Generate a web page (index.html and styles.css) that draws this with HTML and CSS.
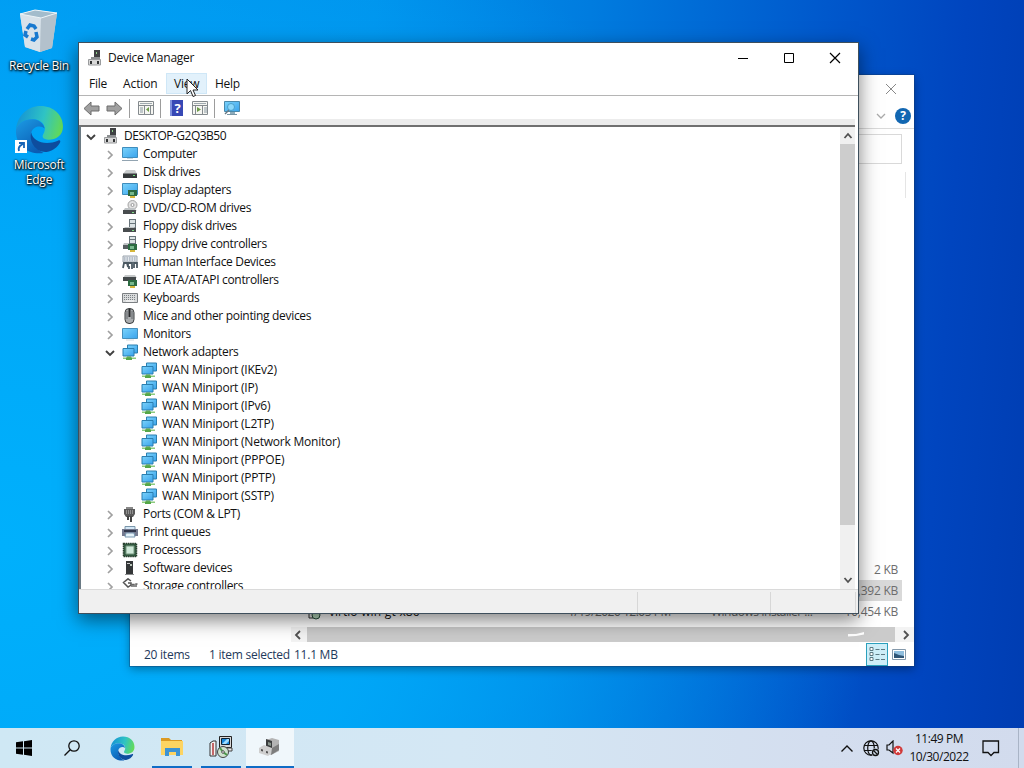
FILE: index.html
```html
<!DOCTYPE html>
<html lang="en">
<head>
  <meta charset="UTF-8">
  <meta name="viewport" content="width=device-width, initial-scale=1.0">
  <title>Device Manager</title>
  <link rel="stylesheet" href="styles.css">
</head>

<body>
  <!-- shared icons -->
  <svg class="defs" width="0" height="0">
    <defs>
      <linearGradient id="screen" x1="0" y1="0" x2="1" y2="1">
        <stop offset="0" stop-color="#7bd3fb"/><stop offset="1" stop-color="#3aa3ec"/>
      </linearGradient>
      <linearGradient id="edgeGreen" x1="0" y1="0.4" x2="1" y2="0.6">
        <stop offset="0" stop-color="#1593d4"/><stop offset="0.55" stop-color="#2fc3c4"/><stop offset="1" stop-color="#66dc54"/>
      </linearGradient>
      <linearGradient id="edgeBlue" x1="0" y1="0" x2="0.6" y2="1">
        <stop offset="0" stop-color="#1c9be4"/><stop offset="1" stop-color="#0b5cb4"/>
      </linearGradient>
    </defs>
    <symbol id="chev-right" viewBox="0 0 10 10"><path d="M3 1l4 4-4 4" fill="none" stroke="#a0a0a0" stroke-width="1.700"/></symbol>
    <symbol id="chev-down" viewBox="0 0 10 10"><path d="M1 3l4 4 4-4" fill="none" stroke="#404040" stroke-width="1.900"/></symbol>
    <symbol id="root" viewBox="0 0 16 16">
      <path d="M7 0h6v8H7z" fill="#3f4143"/><path d="M9 2h1v2H9z" fill="#8ed08b"/>
      <path d="M4 7h9v3H4z" fill="#8c8f91"/><path d="M1.500 9.500h12v5.500h-12z" fill="#d8d8d8" stroke="#9a9c9e"/>
      <path d="M3 11h2v3H3zM10 11h2v3h-2z" fill="#303234"/>
    </symbol>
    <symbol id="computer" viewBox="0 0 16 16">
      <path d="M.5 1.500h15v10H.5z" fill="url(#screen)" stroke="#3f8dbd"/><path d="M5 12h6v1H5z" fill="#c6d6df"/><path d="M0 14.500h16" stroke="#92a4b1"/>
    </symbol>
    <symbol id="disk" viewBox="0 0 16 16">
      <path d="M4 6h9l2 4H1z" fill="#c9cccd"/><path d="M1 9.500h14V14H1z" fill="#35393b"/><path d="M11 11h2v1h-2z" fill="#6ce077"/>
    </symbol>
    <symbol id="card" viewBox="0 0 16 16">
      <path d="M6 8h9v6H6z" fill="#2c6b41"/><path d="M8 10h4v3H8z" fill="#78b98c"/><path d="M8 14h5v2H8z" fill="#d6b73c"/>
    </symbol>
    <symbol id="display" viewBox="0 0 16 16">
      <path d="M.5 1.500h15v11H.5z" fill="url(#screen)" stroke="#3f8dbd"/><use href="#card"/>
    </symbol>
    <symbol id="dvd" viewBox="0 0 16 16">
      <circle cx="10.500" cy="5" r="4.500" fill="#e1e1e1" stroke="#a3a3a3"/><circle cx="10.500" cy="5" r="1.500" fill="#fff" stroke="#999"/>
      <path d="M3 8h9l3 3H1z" fill="#bfc3c5"/><path d="M1 10h13v4H1z" fill="#484c4e"/><path d="M10 12h2v1h-2z" fill="#81dd86"/>
    </symbol>
    <symbol id="floppy" viewBox="0 0 16 16">
      <path d="M7 1h7v9H7z" fill="#68747a"/><path d="M8 2h5v3H8zM8 6h5v3H8z" fill="#dbe2e4"/>
      <path d="M3 9h9l2 2H1z" fill="#bfc3c5"/><path d="M1 10h13v4H1z" fill="#484c4e"/><path d="M10 12h2v1h-2z" fill="#81dd86"/>
    </symbol>
    <symbol id="floppy-ctl" viewBox="0 0 16 16">
      <path d="M7 0h7v8H7z" fill="#68747a"/><path d="M8 1h5v2H8zM8 4h5v3H8z" fill="#dbe2e4"/>
      <path d="M2 7h5v2H1z" fill="#bfc3c5"/><path d="M1 9h9v4H1z" fill="#565d60"/><use href="#card"/>
    </symbol>
    <symbol id="hid" viewBox="0 0 16 16">
      <path d="M1 2h14v6H1z" fill="#e3e7ec" stroke="#9ba4ad"/><path d="M2 4h12M2 6h12" stroke="#8997a6" stroke-dasharray="1.500 1"/>
      <path d="M1 14l1-5h3l1 4V9h4v6M7 15v-3M12 14V9h3v5" fill="none" stroke="#4b5962" stroke-width="1.800"/>
    </symbol>
    <symbol id="ide" viewBox="0 0 16 16">
      <path d="M3 3h10l2 3H1z" fill="#c5c8c9"/><path d="M1 5h13v4H1z" fill="#44494b"/><use href="#card"/>
    </symbol>
    <symbol id="keyboard" viewBox="0 0 16 16">
      <path d="M.5 3.500h15v9H.5z" fill="#d9dbdc" stroke="#7c8083"/><path d="M2 5.500h12M2 7.500h12M2 9.500h12" stroke="#7b8185" stroke-dasharray="1 1"/><path d="M4 11h8" stroke="#fff"/>
    </symbol>
    <symbol id="mouse" viewBox="0 0 16 16">
      <rect x="3" y=".5" width="9" height="15" rx="4" fill="#a9acae" stroke="#3b3e40"/><path d="M7.500 1v8" stroke="#26292b" stroke-width="2"/><path d="M5 3v8M10 3v8" stroke="#65696c"/>
    </symbol>
    <symbol id="monitor" viewBox="0 0 16 16">
      <path d="M.5 2.500h15v10H.5z" fill="url(#screen)" stroke="#4690bd"/><path d="M4 14h8" stroke="#d3d9dd"/>
    </symbol>
    <symbol id="network" viewBox="0 0 16 16">
      <path d="M5.500 1h10v8h-10z" fill="url(#screen)" stroke="#2b7fb0"/><path d="M1 4.500h11V12H1z" fill="url(#screen)" stroke="#2b7fb0"/>
      <path d="M5 12.500h4V14H5z" fill="#4f9a43"/><path d="M1 13.500h13V15H1z" fill="#8ccb7e"/><path d="M4 13.500h6V16H4z" fill="#55a648"/>
    </symbol>
    <symbol id="port" viewBox="0 0 16 16">
      <path d="M4 1h7v3H4z" fill="#888"/><path d="M2 3h11v5l-2 3H4L2 8z" fill="#5a5a5a"/><path d="M4 5h8M4 7h8" stroke="#c7c7c7" stroke-dasharray="1 1"/><path d="M5 10h2v4H5zM8 10h2v6H8z" fill="#444"/>
    </symbol>
    <symbol id="printer" viewBox="0 0 16 16">
      <path d="M3 2.500h10V6H3z" fill="#d4e7f6" stroke="#7995a9"/><path d="M0 5h16v7H0z" fill="#74798e"/><path d="M2 6h12v2H2z" fill="#30354a"/><path d="M4 9h8l1 4H3z" fill="#e5f3fa" stroke="#7897b0"/>
    </symbol>
    <symbol id="cpu" viewBox="0 0 16 16">
      <path d="M1.500 1.500h13v13h-13z" fill="#345d43"/><path d="M1.500 1.500h13v13h-13z" fill="none" stroke="#273e2d" stroke-width="1.500" stroke-dasharray="1.500 .7"/><path d="M4 4h8v8H4z" fill="#cfe9d9" stroke="#75967f"/>
    </symbol>
    <symbol id="software" viewBox="0 0 16 16">
      <path d="M4 1h7v13H4z" fill="#343738"/><path d="M5 3h3v1H5z" fill="#ccc"/><path d="M8 4h2v2H8z" fill="#b9c6ba"/><path d="M3 14h9v1H3z" fill="#8b8d8e"/>
    </symbol>
    <symbol id="storage" viewBox="0 0 16 16">
      <path d="M9 3L6 .8 1.500 4.500 6 9l3-2V5H6" fill="none" stroke="#555" stroke-width="1.500"/><path d="M10 9V6.500h2V9M14 9V6h1.500" fill="none" stroke="#666" stroke-width="1.500"/>
    </symbol>
    <symbol id="edge" viewBox="0 0 48 48">
      <path d="M1 24C2 11 12 1 25 1c13 0 22 9 22 20 0 9-7 13-14 13-6 0-7-3-5-6 4-7-2-14-10-14C9 14 3 18 1 24z" fill="url(#edgeGreen)"/>
      <path d="M1 24c2-6 8-10 16-10 6 0 11 4 12 9-3-3-11-3-13 4-2 8 4 16 12 20C13 49 0 40 1 24z" fill="url(#edgeBlue)"/>
      <path d="M16 27c-3 9 5 20 15 19 6-1 11-5 13-9 1-2 0-3-2-2-12 5-25 1-26-8z" fill="#0e4d9e"/>
    </symbol>
  </svg>

  <div class="desktop">
    <div class="shortcuts">
      <div class="shortcut">
        <svg class="bin" width="40" height="44" viewBox="0 0 40 44">
          <path d="M1 5L16 1l22 3-5 35-12 4-15-5z" fill="#c9d6df"/>
          <path d="M1 5l21 4-1 34-15-5z" fill="#d8e2ea"/><path d="M22 9l16-5-5 35-12 4z" fill="#b3c1cc"/>
          <path d="M1 5L16 1l22 3-16 5z" fill="#a3bccc" stroke="#edf4f8"/>
          <path d="M8 20l3-4 4 1 2 3M17 23l1 5-3 3-3-1M9 28l-3-2 1-4" fill="none" stroke="#1879cf" stroke-width="3.500"/>
        </svg>
        <span>Recycle Bin</span>
      </div>
      <div class="shortcut">
        <div class="edge-icon">
          <svg width="49" height="49"><use href="#edge"/></svg>
          <svg class="arrow" width="12" height="13" viewBox="0 0 12 13"><path d="M0 0h12v13H0z" fill="#fff"/><path d="M4 3h5v5M9 3L5 6q-2 2-1 5" fill="none" stroke="#1763b5" stroke-width="1.800"/></svg>
        </div>
        <span>Microsoft<br>Edge</span>
      </div>
    </div>

    <!-- file explorer behind -->
    <div class="window explorer">
      <div class="ex-title">
        <svg width="12" height="12" viewBox="0 0 12 12"><path d="M1 1l10 10M11 1L1 11" stroke="#888"/></svg>
      </div>
      <div class="ex-ribbon">
        <svg width="10" height="10" viewBox="0 0 10 10"><path d="M1 3l4 4 4-4" fill="none" stroke="#aaa" stroke-width="1.300"/></svg>
        <span class="help-badge">?</span>
      </div>
      <div class="ex-address"><div class="ex-search"></div></div>
      <div class="ex-header"></div>
      <div class="ex-body">
        <div class="ex-nav"></div>
        <div class="ex-files">
          <div class="file"><span></span><span></span><span></span><span></span><span class="size">2 KB</span></div>
          <div class="file selected"><span></span><span></span><span></span><span></span><span class="size">11,392 KB</span></div>
          <div class="file">
            <svg width="16" height="16" viewBox="0 0 16 16"><path d="M2 2h4v12H2z" fill="#eee" stroke="#333"/><path d="M7 2h6v5H7z" fill="#49a7d9" stroke="#333"/><circle cx="9" cy="11" r="4" fill="#b9dcc0" stroke="#264c3a"/></svg>
            <span class="name">virtio-win-gt-x86</span><span>1/19/2020 12:05 PM</span><span>Windows Installer ...</span><span class="size">10,454 KB</span>
          </div>
          <div class="hscroll">
            <svg width="10" height="10" viewBox="0 0 10 10"><path d="M7 1L3 5l4 4" fill="none" stroke="#505050" stroke-width="1.800"/></svg>
            <div class="hthumb"><svg width="16" height="5" viewBox="0 0 16 5"><path d="M0 2l8 0 8-2v2.500L8 4 0 4.500z" fill="#fff"/></svg></div>
            <svg width="10" height="10" viewBox="0 0 10 10"><path d="M3 1l4 4-4 4" fill="none" stroke="#505050" stroke-width="1.800"/></svg>
          </div>
        </div>
      </div>
      <div class="ex-status">
        <span class="count">20 items</span><span class="picked">1 item selected</span><span>11.1 MB</span>
        <div class="view-details">
          <svg width="17" height="14" viewBox="0 0 17 14"><path d="M1 .5h3v3H1zM1 5.500h3v3H1zM1 10.500h3v3H1z" fill="#fff" stroke="#5d7a83"/><path d="M6.500 2.500h4M6.500 7.500h4M6.500 12.500h4M12 2.500h4M12 7.500h4M12 12.500h4" stroke="#5d7a83"/></svg>
        </div>
        <svg width="14" height="11" viewBox="0 0 14 11"><path d="M.5.5h13v10H.5z" fill="#fff" stroke="#8499ab"/><path d="M2 2h10v7H2z" fill="#8fbede"/><path d="M2 4l5 2 5 1v2H2z" fill="#2f5576"/></svg>
      </div>
    </div>

    <div class="window devmgr">
      <div class="titlebar">
        <svg width="16" height="16"><use href="#root"/></svg>
        <span class="title">Device Manager</span>
        <div class="controls">
          <svg width="12" height="12" viewBox="0 0 12 12"><path d="M1 6.500h10" stroke="#000"/></svg>
          <svg width="12" height="12" viewBox="0 0 12 12"><path d="M1.500 1.500h9v9h-9z" fill="none" stroke="#000"/></svg>
          <svg width="12" height="12" viewBox="0 0 12 12"><path d="M1 1l10 10M11 1L1 11" stroke="#000" stroke-width="1.200"/></svg>
        </div>
      </div>
      <div class="menubar">
        <span class="m-file">File</span><span class="m-action">Action</span><span class="m-view">View</span><span class="m-help">Help</span>
      </div>
      <div class="toolbar">
        <svg width="17" height="15" viewBox="0 0 17 15"><path d="M1 7.500L8 1v4h8v5H8v4z" fill="#a0a0a0" stroke="#6d6d6d"/></svg>
        <svg class="fwd" width="17" height="15" viewBox="0 0 17 15"><path d="M16 7.500L9 1v4H1v5h8v4z" fill="#a0a0a0" stroke="#6d6d6d"/></svg>
        <i class="sep"></i>
        <svg width="16" height="14" viewBox="0 0 16 14"><path d="M.5.5h15v13H.5z" fill="#f6f6f2" stroke="#848a8e"/><path d="M2 2.500h12" stroke="#a0aab0"/><path d="M1 4.500h14M6.500 5v8M12.500 5v8" stroke="#848a8e"/><path d="M2 7h3M2 9h3M2 11h3" stroke="#8a99a2"/><path d="M11 6v5L8 8.500z" fill="#6b9a47"/></svg>
        <i class="sep"></i>
        <svg class="help-book" width="13" height="16" viewBox="0 0 13 16"><path d="M0 0h13v16H0z" fill="#3748b5"/><path d="M0 0h2v16H0z" fill="#7e90dd"/><text x="7.500" y="13" text-anchor="middle">?</text></svg>
        <svg class="pane" width="16" height="14" viewBox="0 0 16 14"><path d="M.5.5h15v13H.5z" fill="#f6f6f2" stroke="#848a8e"/><path d="M2 2.500h12" stroke="#a0aab0"/><path d="M1 4.500h14M10.500 5v8M3.500 5v8" stroke="#848a8e"/><path d="M12 7h3M12 9h3M12 11h3" stroke="#8a99a2"/><path d="M5 6v5l4-2.500z" fill="#6b9a47"/></svg>
        <i class="sep"></i>
        <svg width="17" height="16" viewBox="0 0 17 16"><path d="M1.500 1.500h15v10h-15z" fill="url(#screen)" stroke="#4a89ab"/><path d="M7 12h5v2H7z" fill="#8cabbb"/><path d="M4 14.500h10" stroke="#7895a5"/><circle cx="8" cy="7" r="3.500" fill="#8bd8fb" stroke="#4b9fca"/><path d="M6 10l-4 4" stroke="#667984" stroke-width="1.500"/></svg>
      </div>
      <div class="tree-box">
        <div class="tree">
          <div class="node root"><svg class="chev"><use href="#chev-down"/></svg><svg class="ico"><use href="#root"/></svg>DESKTOP-G2Q3B50</div>
          <div class="node"><svg class="chev"><use href="#chev-right"/></svg><svg class="ico"><use href="#computer"/></svg>Computer</div>
          <div class="node"><svg class="chev"><use href="#chev-right"/></svg><svg class="ico"><use href="#disk"/></svg>Disk drives</div>
          <div class="node"><svg class="chev"><use href="#chev-right"/></svg><svg class="ico"><use href="#display"/></svg>Display adapters</div>
          <div class="node"><svg class="chev"><use href="#chev-right"/></svg><svg class="ico"><use href="#dvd"/></svg>DVD/CD-ROM drives</div>
          <div class="node"><svg class="chev"><use href="#chev-right"/></svg><svg class="ico"><use href="#floppy"/></svg>Floppy disk drives</div>
          <div class="node"><svg class="chev"><use href="#chev-right"/></svg><svg class="ico"><use href="#floppy-ctl"/></svg>Floppy drive controllers</div>
          <div class="node"><svg class="chev"><use href="#chev-right"/></svg><svg class="ico"><use href="#hid"/></svg>Human Interface Devices</div>
          <div class="node"><svg class="chev"><use href="#chev-right"/></svg><svg class="ico"><use href="#ide"/></svg>IDE ATA/ATAPI controllers</div>
          <div class="node"><svg class="chev"><use href="#chev-right"/></svg><svg class="ico"><use href="#keyboard"/></svg>Keyboards</div>
          <div class="node"><svg class="chev"><use href="#chev-right"/></svg><svg class="ico"><use href="#mouse"/></svg>Mice and other pointing devices</div>
          <div class="node"><svg class="chev"><use href="#chev-right"/></svg><svg class="ico"><use href="#monitor"/></svg>Monitors</div>
          <div class="node"><svg class="chev"><use href="#chev-down"/></svg><svg class="ico"><use href="#network"/></svg>Network adapters</div>
          <div class="node leaf"><svg class="ico"><use href="#network"/></svg>WAN Miniport (IKEv2)</div>
          <div class="node leaf"><svg class="ico"><use href="#network"/></svg>WAN Miniport (IP)</div>
          <div class="node leaf"><svg class="ico"><use href="#network"/></svg>WAN Miniport (IPv6)</div>
          <div class="node leaf"><svg class="ico"><use href="#network"/></svg>WAN Miniport (L2TP)</div>
          <div class="node leaf"><svg class="ico"><use href="#network"/></svg>WAN Miniport (Network Monitor)</div>
          <div class="node leaf"><svg class="ico"><use href="#network"/></svg>WAN Miniport (PPPOE)</div>
          <div class="node leaf"><svg class="ico"><use href="#network"/></svg>WAN Miniport (PPTP)</div>
          <div class="node leaf"><svg class="ico"><use href="#network"/></svg>WAN Miniport (SSTP)</div>
          <div class="node"><svg class="chev"><use href="#chev-right"/></svg><svg class="ico"><use href="#port"/></svg>Ports (COM &amp; LPT)</div>
          <div class="node"><svg class="chev"><use href="#chev-right"/></svg><svg class="ico"><use href="#printer"/></svg>Print queues</div>
          <div class="node"><svg class="chev"><use href="#chev-right"/></svg><svg class="ico"><use href="#cpu"/></svg>Processors</div>
          <div class="node"><svg class="chev"><use href="#chev-right"/></svg><svg class="ico"><use href="#software"/></svg>Software devices</div>
          <div class="node"><svg class="chev"><use href="#chev-right"/></svg><svg class="ico"><use href="#storage"/></svg>Storage controllers</div>
        </div>
        <div class="vscroll">
          <svg width="10" height="17" viewBox="0 0 10 17"><path d="M1.500 11L5 7l3.500 4" fill="none" stroke="#505050" stroke-width="1.800"/></svg>
          <div class="vthumb"></div>
          <svg width="10" height="17" viewBox="0 0 10 17"><path d="M1.500 6L5 10l3.500-4" fill="none" stroke="#505050" stroke-width="1.800"/></svg>
        </div>
      </div>
      <div class="statusbar"><div></div><div></div><div></div></div>
    </div>

    <svg class="cursor" width="13" height="20" viewBox="0 0 13 20"><path d="M1 1v15l3.500-3.500L7 18.500l2.500-1L7 12h5z" fill="#fff" stroke="#222"/></svg>
  </div>

  <div class="taskbar">
    <div class="task"><svg width="16" height="16" viewBox="0 0 16 16"><path d="M0 2.300l7-1v6.200H0zM8 1.200L16 0v7.500H8zM0 8.500h7v6.200l-7-1zM8 8.500h8V16l-8-1.200z"/></svg></div>
    <div class="task"><svg width="18" height="18" viewBox="0 0 18 18"><circle cx="11" cy="7" r="5.200" fill="none" stroke="#111" stroke-width="1.300"/><path d="M7.200 10.800L1.500 16.500" stroke="#111" stroke-width="1.300"/></svg></div>
    <div class="task edge-task"><svg width="25" height="25"><use href="#edge"/></svg></div>
    <div class="task running"><svg width="23" height="20" viewBox="0 0 23 20"><path d="M0 1h8l2 2h11v5H0z" fill="#dc9a22"/><path d="M0 4h22v14H0z" fill="#fdd462"/><path d="M4 19v-8h15v8h-4v-4H8v4z" fill="#3d93d3"/></svg></div>
    <div class="task running">
      <svg width="24" height="24" viewBox="0 0 24 24"><path d="M1 8l3-2h3v15H1z" fill="#f2f2f2" stroke="#333"/><path d="M4 8v12" stroke="#b33a3a" stroke-width="1.500"/><path d="M10.500 1.500h12v11h-12z" fill="#d8d8d8" stroke="#222"/><path d="M12.500 3.500h8v6h-8z" fill="#1687dc" stroke="#123"/><path d="M13 9l5-5h2v2l-3 3z" fill="#9edbff"/><path d="M10 13h13v3H10z" fill="#e9e9e9" stroke="#444"/><circle cx="14" cy="17" r="5.500" fill="#cfe3cf" stroke="#444"/><path d="M14 17l-3-4M14 17l4 3" stroke="#4a9a4a" stroke-width="2"/><circle cx="14" cy="17" r="1.300" fill="#fff" stroke="#555"/></svg>
    </div>
    <div class="task running active">
      <svg width="24" height="20" viewBox="0 0 24 20"><path d="M8 3l6-2 7 2v11l-8 4-5-3z" fill="#b4b4b4"/><path d="M8 2l6 2v9l-6-2z" fill="#3b3d3e"/><path d="M10 5l3 1v3l-3-1z" fill="#8a958d"/><path d="M1 11l5-3 8 3v5l-4 3-9-3z" fill="#cfcfcf"/><path d="M14 11l7-4v6l-8 5z" fill="#7d7d7d"/><path d="M3 12l2 .6v2L3 14zM8 14l2 .6v2L8 16z" fill="#555"/></svg>
    </div>
    <div class="tray">
      <svg width="14" height="9" viewBox="0 0 14 9"><path d="M1.500 7.500L7 2l5.500 5.500" fill="none" stroke="#111" stroke-width="1.400"/></svg>
      <svg class="globe" width="17" height="17" viewBox="0 0 17 17"><g fill="none" stroke="#111" stroke-width="1.200"><circle cx="8" cy="8" r="7.200"/><ellipse cx="8" cy="8" rx="3.300" ry="7.200"/><path d="M1 5.500h14M1 10.500h14"/></g><circle cx="12.500" cy="12.500" r="4.200" fill="#d2dfee"/><circle cx="12.500" cy="12.500" r="3" fill="none" stroke="#111" stroke-width="1.300"/><path d="M10.500 10.500l4 4" stroke="#111" stroke-width="1.200"/></svg>
      <svg class="speaker" width="17" height="16" viewBox="0 0 17 16"><path d="M1 5h2l4-4v12L3 10H1z" fill="none" stroke="#111" stroke-width="1.200"/><circle cx="12" cy="10.500" r="4.700" fill="#d13a3a"/><path d="M10 8.500l4 4M14 8.500l-4 4" stroke="#fff" stroke-width="1.300"/></svg>
      <div class="clock"><span>11:49 PM</span><span>10/30/2022</span></div>
      <svg class="action-center" width="18" height="17" viewBox="0 0 18 17"><path d="M1 1h15.500v11.500H12L9 15.500l-3-3H1z" fill="none" stroke="#111" stroke-width="1.300"/></svg>
      <div class="peek"></div>
    </div>
  </div>
</body>
</html>
```
FILE: styles.css
```css
* {
  box-sizing: border-box;
}

body {
  margin: 0;
  width: 1024px;
  height: 768px;
  overflow: hidden;
  display: flex;
  flex-direction: column;
  font-family: "Open Sans", "Noto Sans", sans-serif;
  font-size: 12px;
  letter-spacing: -0.25px;
  color: #111;
}

svg {
  display: block;
  flex: none;
}

.defs {
  position: absolute;
}

.desktop {
  position: relative;
  flex: 1;
  background:
    radial-gradient(ellipse 880px 700px at 0% 75%, #00b0fc 0%, rgba(0, 172, 250, 0.8) 45%, rgba(0, 150, 240, 0) 100%),
    linear-gradient(94deg, #0098f0 0%, #0092ec 35%, #007cdf 55%, #0058cc 77%, #0045bf 90%, #003db2 100%);
}

/* desktop shortcuts */
.shortcuts {
  width: 78px;
  padding-top: 9px;
  display: flex;
  flex-direction: column;
  gap: 32px;
}

.shortcut {
  display: flex;
  flex-direction: column;
  align-items: center;
  text-align: center;
  line-height: 15px;
  color: #fff;
  text-shadow: 1px 1px 2px #000, 0 0 2px #000, 0 1px 3px rgba(0, 0, 0, 0.7);
}

.shortcut span {
  margin-top: 5px;
  white-space: nowrap;
}

.edge-icon {
  position: relative;
  margin-bottom: -2px;
}

.arrow {
  position: absolute;
  left: 0;
  bottom: 1px;
}

/* windows */
.window {
  position: absolute;
  display: flex;
  flex-direction: column;
  background: #fff;
}

.explorer {
  left: 130px;
  top: 75px;
  width: 784px;
  height: 591px;
  color: #6d6d6d;
  box-shadow: 0 0 0 1px rgba(20, 60, 110, 0.4), 0 3px 9px rgba(0, 0, 0, 0.35);
}

.ex-title {
  height: 28px;
  display: flex;
  align-items: center;
  justify-content: flex-end;
  padding-right: 17px;
}

.ex-ribbon {
  height: 26px;
  display: flex;
  align-items: center;
  justify-content: flex-end;
  gap: 9px;
  padding-right: 3px;
  border-bottom: 1px solid #dadada;
}

.help-badge {
  width: 16px;
  height: 16px;
  border-radius: 50%;
  background: #1267b2;
  color: #fff;
  font-weight: bold;
  line-height: 16px;
  text-align: center;
}

.ex-address {
  height: 42px;
  padding: 5px 12px 7px 0;
}

.ex-search {
  height: 30px;
  border: 1px solid #d9d9d9;
}

.ex-header {
  height: 26px;
  margin: 1px 8px 0 0;
  border-right: 1px solid #e5e5e5;
}

.ex-body {
  flex: 1;
  display: flex;
}

.ex-nav {
  width: 161px;
}

.ex-files {
  flex: 1;
  display: flex;
  flex-direction: column;
  justify-content: flex-end;
}

.file {
  height: 21px;
  margin: 0 12px 0 14px;
  padding: 0 4px 0 2px;
  display: grid;
  grid-template-columns: 22px 239px 143px 110px 1fr;
  align-items: center;
  white-space: nowrap;
  letter-spacing: -0.5px;
}

.file .name {
  color: #111;
  letter-spacing: 0;
}

.file .size {
  text-align: right;
  letter-spacing: -0.25px;
}

.selected {
  background: #d9d9d9;
}

.hscroll {
  height: 15px;
  margin-top: 5px;
  padding: 0 3px 0 2px;
  display: flex;
  align-items: center;
  background: #f3f3f3;
}

.hthumb {
  flex: 1;
  height: 15px;
  margin: 0 6px 0 4px;
  padding: 5px 31px 0 0;
  display: flex;
  justify-content: flex-end;
  background: #cbcbcb;
}

.ex-status {
  height: 24px;
  display: flex;
  align-items: center;
  padding: 0 8px 0 14px;
  color: #1e395b;
}

.count {
  width: 65px;
}

.picked {
  width: 85px;
}

.view-details {
  width: 22px;
  height: 23px;
  margin: 0 4px 0 auto;
  display: flex;
  align-items: center;
  justify-content: center;
  background: #cdeef8;
  border: 1px solid #2ba0bd;
}

/* device manager */
.devmgr {
  left: 78px;
  top: 42px;
  width: 781px;
  height: 572px;
  border: 1px solid #3e4f5c;
  box-shadow: 0 6px 18px rgba(0, 0, 0, 0.5);
}

.titlebar {
  height: 29px;
  padding: 0 17px 0 8px;
  display: flex;
  align-items: center;
}

.title {
  margin-left: 5px;
}

.controls {
  margin-left: auto;
  display: flex;
  gap: 34px;
}

.menubar {
  height: 24px;
  padding-top: 1px;
  display: flex;
  line-height: 22px;
  border-bottom: 1px solid #b5b5b5;
}

.m-file {
  width: 44px;
  padding-left: 10px;
}

.m-action {
  width: 43px;
  letter-spacing: -0.1px;
}

.m-view {
  width: 41px;
  height: 21px;
  padding-left: 7px;
  background: #e2f1fb;
  border: 1px solid #cfe7f7;
  line-height: 20px;
}

.m-help {
  padding-left: 8px;
}

.toolbar {
  height: 23px;
  padding: 1px 0 0 4px;
  display: flex;
  align-items: center;
}

.fwd {
  margin-left: 6px;
}

.sep {
  width: 1px;
  height: 19px;
  margin: 0 8px 0 6px;
  background: #9c9c9c;
}

.help-book {
  margin-left: 1px;
}

.help-book text {
  fill: #fff;
  font-size: 13px;
  font-weight: bold;
}

.pane {
  margin-left: 9px;
}

.tree-box {
  height: 470px;
  margin-right: 3px;
  display: flex;
  border-top: 6px solid #ececec;
}

.tree {
  flex: 1;
  height: 464px;
  overflow: hidden;
  border-top: 2px solid #707070;
  border-left: 2px solid #6a7a84;
}

.node {
  height: 18px;
  padding-left: 24px;
  display: flex;
  align-items: center;
  white-space: nowrap;
  line-height: 18px;
  letter-spacing: -0.32px;
}

.node.root {
  padding-left: 5px;
  letter-spacing: -0.5px;
}

.node.leaf {
  padding-left: 60px;
  letter-spacing: -0.22px;
}

.chev {
  width: 10px;
  height: 10px;
  margin: 2px 7px 0 0;
}

.ico {
  width: 16px;
  height: 16px;
  margin-right: 5px;
}

.vscroll {
  width: 15px;
  border-top: 2px solid #707070;
  display: flex;
  flex-direction: column;
  align-items: center;
  background: #f0f0f0;
}

.vthumb {
  width: 15px;
  height: 381px;
  margin-bottom: auto;
  background: #cdcdcd;
}

.statusbar {
  flex: 1;
  padding-top: 2px;
  display: flex;
  background: #f0f0f0;
  border-top: 1px solid #dadada;
}

.statusbar div {
  width: 133px;
  border-right: 1px solid #d7d7d7;
}

.statusbar div:first-child {
  width: 559px;
}

.statusbar div:last-child {
  width: 85px;
}

.cursor {
  position: absolute;
  left: 186px;
  top: 78px;
}

/* taskbar */
.taskbar {
  height: 40px;
  display: flex;
  background: linear-gradient(90deg, #cfe8f4 0%, #d4e7f4 45%, #d4deef 80%, #d2dbed 100%);
}

.task {
  width: 48px;
  height: 40px;
  display: flex;
  align-items: center;
  justify-content: center;
}

.edge-task {
  margin-left: 2px;
}

.running {
  width: 40px;
  margin-left: 6px;
  border-bottom: 2px solid #0f6cc6;
}

.running + .running {
  margin-left: 9px;
}

.running.active {
  width: 48px;
  margin-left: 5px;
  background: #f0f7fb;
}

.tray {
  margin-left: auto;
  display: flex;
  align-items: center;
}

.globe {
  margin-left: 9px;
}

.speaker {
  margin-left: 6px;
}

.clock {
  width: 58px;
  margin: 0 14px 0 7px;
  display: flex;
  flex-direction: column;
  align-items: center;
  line-height: 18px;
  letter-spacing: -0.45px;
}

.peek {
  width: 6px;
  height: 40px;
  margin-left: 18px;
  border-left: 1px solid #a9b4c6;
}
```
